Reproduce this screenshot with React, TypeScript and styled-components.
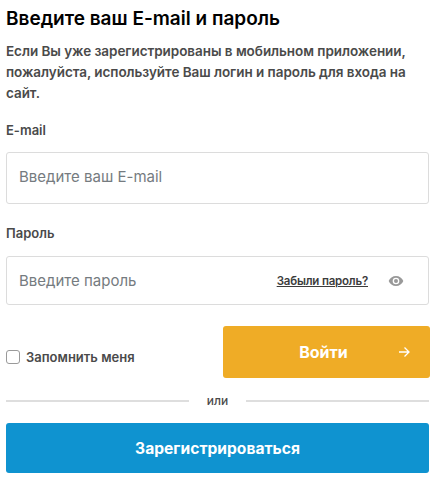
import React from 'react';
import styled, { createGlobalStyle } from 'styled-components';

const GlobalStyle = createGlobalStyle`
  html, body {
    margin: 0;
    padding: 0;
    background: #fff;
    font-family: Inter, "Noto Sans", sans-serif;
  }
  * { box-sizing: border-box; }
`;

const Page = styled.div`
  width: 433px;
  padding: 8px 4px 0 6px;
  display: flex;
  flex-direction: column;
`;

const Title = styled.h1`
  margin: 0;
  color: #000;
  font-size: 19px;
  font-weight: 600;
  line-height: 22px;
`;

const Intro = styled.p`
  margin: 11px 0 0;
  color: #4a4a4a;
  font-size: 13.5px;
  font-weight: 600;
  line-height: 21px;
  letter-spacing: -0.05px;
`;

const Label = styled.label<{ $top: number }>`
  display: block;
  margin-top: ${p => p.$top}px;
  color: #4a4a4a;
  font-size: 13px;
  font-weight: 600;
  line-height: 16px;
`;

const Field = styled.div<{ $height: number; $gap: number; $textBottom: number }>`
  margin-top: ${p => p.$gap}px;
  height: ${p => p.$height}px;
  width: 423px;
  padding: 0 12px ${p => p.$textBottom}px;
  display: flex;
  align-items: center;
  border: 1px solid #dcdcdc;
  border-radius: 3px;
  background: #fff;
`;

const Placeholder = styled.span`
  flex: 1;
  color: #757b80;
  font-size: 15px;
  font-weight: 400;
`;

const Forgot = styled.a`
  color: #3c3c3c;
  font-size: 11.5px;
  font-weight: 600;
  letter-spacing: -0.2px;
  text-decoration: underline;
`;

const EyeIcon = styled.svg`
  margin-left: 20px;
  margin-right: 12px;
  width: 16px;
  height: 16px;
  fill: #999;
`;

const ActionRow = styled.div`
  margin-top: 21px;
  margin-right: -1px;
  display: flex;
  align-items: center;
  justify-content: space-between;
`;

const Remember = styled.label`
  margin-top: 10px;
  display: flex;
  align-items: center;
  gap: 6px;
  color: #4a4a4a;
  font-size: 13px;
  font-weight: 600;
`;

const Check = styled.span`
  width: 14px;
  height: 14px;
  border: 1px solid #9a9a9a;
  border-radius: 3px;
  background: #fff;
`;

const LoginButton = styled.button`
  position: relative;
  width: 207px;
  height: 52px;
  padding: 0 6px 0 0;
  border: 0;
  border-radius: 3px;
  background: #efac26;
  color: #fff;
  font: 700 16px Inter, sans-serif;
`;

const ArrowIcon = styled.svg`
  position: absolute;
  right: 19px;
  top: 19px;
  width: 14px;
  height: 14px;
  fill: none;
  stroke: #fff;
  stroke-width: 1.3;
`;

const Divider = styled.div`
  margin-top: 14px;
  display: flex;
  align-items: center;
  gap: 18px;
  color: #4a4a4a;
  font-size: 12px;
  font-weight: 500;
  line-height: 18px;
  &::before, &::after {
    content: '';
    flex: 1;
    height: 2px;
    background: #dedede;
  }
`;

const RegisterButton = styled.button`
  margin-top: 13px;
  width: 423px;
  height: 50px;
  padding: 0;
  border: 0;
  border-radius: 3px;
  background: #0f93d0;
  color: #fff;
  font: 700 15.6px Inter, sans-serif;
`;

export default function App() {
  return (
    <Page>
      <GlobalStyle />
      <Title>Введите ваш E-mail и пароль</Title>
      <Intro>
        Если Вы уже зарегистрированы в мобильном приложении, пожалуйста, используйте Ваш логин и пароль для входа на сайт.
      </Intro>
      <Label $top={18}>E-mail</Label>
      <Field $height={52} $gap={14} $textBottom={4}>
        <Placeholder>Введите ваш E-mail</Placeholder>
      </Field>
      <Label $top={21}>Пароль</Label>
      <Field $height={49} $gap={15} $textBottom={0}>
        <Placeholder>Введите пароль</Placeholder>
        <Forgot>Забыли пароль?</Forgot>
        <EyeIcon viewBox="0 0 24 24">
          <path d="M12 4.5C7 4.5 2.7 7.6 1 12c1.7 4.4 6 7.5 11 7.5s9.3-3.1 11-7.5c-1.7-4.4-6-7.5-11-7.5zM12 17a5 5 0 1 1 0-10 5 5 0 0 1 0 10zm0-8a3 3 0 1 0 0 6 3 3 0 0 0 0-6z" />
        </EyeIcon>
      </Field>
      <ActionRow>
        <Remember>
          <Check />
          Запомнить меня
        </Remember>
        <LoginButton>
          Войти
          <ArrowIcon viewBox="0 0 14 14">
            <path d="M2 7h10M7.5 2.5 12 7l-4.5 4.5" />
          </ArrowIcon>
        </LoginButton>
      </ActionRow>
      <Divider>или</Divider>
      <RegisterButton>Зарегистрироваться</RegisterButton>
    </Page>
  );
}
